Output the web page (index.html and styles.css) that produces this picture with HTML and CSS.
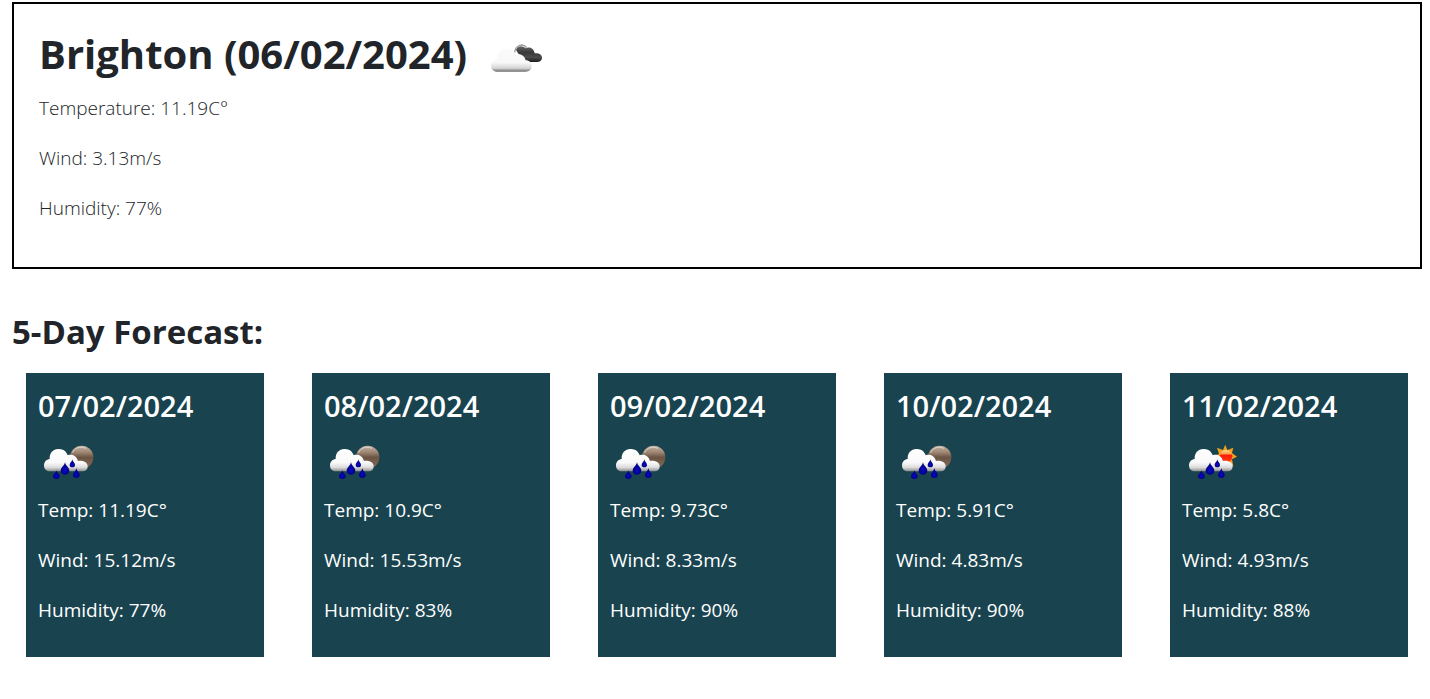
FILE: index.html
```html
<!DOCTYPE html>
<html lang="en">
<head>
<meta charset="utf-8">
<title>Weather Dashboard</title>
<link rel="stylesheet" href="styles.css">
</head>
<body>
<svg class="defs" aria-hidden="true">
  <defs>
    <linearGradient id="cloud" x1="0" y1="0" x2="0" y2="1">
      <stop offset="0" stop-color="#fff"/><stop offset=".6" stop-color="#fafafa"/><stop offset=".82" stop-color="#ddd"/><stop offset="1" stop-color="#8c8c8c"/>
    </linearGradient>
    <linearGradient id="pale" x1="0" y1="0" x2="0" y2="1">
      <stop offset="0" stop-color="#fafafa"/><stop offset=".6" stop-color="#f8f8f8"/><stop offset=".85" stop-color="#d4d4d4"/><stop offset="1" stop-color="#6c6c6c"/>
    </linearGradient>
    <linearGradient id="dark" x1="0" y1="0" x2="0" y2="1">
      <stop offset="0" stop-color="#666"/><stop offset=".4" stop-color="#383838"/><stop offset=".7" stop-color="#4c4c4c"/><stop offset="1" stop-color="#1c1c1c"/>
    </linearGradient>
    <linearGradient id="moon" x1="0" y1="0" x2="0" y2="1">
      <stop offset="0" stop-color="#c5b5a7"/><stop offset=".3" stop-color="#9c8370"/><stop offset=".5" stop-color="#6b5443"/><stop offset="1" stop-color="#866d59"/>
    </linearGradient>
    <linearGradient id="sun" x1="0" y1="0" x2="0" y2="1">
      <stop offset="0" stop-color="#ffe0a0"/><stop offset=".3" stop-color="#ff9a40"/><stop offset=".42" stop-color="#fa1c08"/><stop offset="1" stop-color="#ff3a10"/>
    </linearGradient>
    <radialGradient id="drop" cx=".5" cy=".65" r=".55">
      <stop offset="0" stop-color="#0808d0"/><stop offset="1" stop-color="#00006c"/>
    </radialGradient>
    <g id="rain">
      <path fill="url(#cloud)" d="M57 109C47 108 42 100 42 91C42 80 49 74 59 72C58 54 69 43 85 42C99 41 110 50 113 61C124 57 139 61 144 78C154 76 173 79 173 94C173 104 167 109 158 109Z"/>
      <g fill="url(#drop)">
        <path d="M105 80C105 91 118 96 118 107A13 12 0 0 1 92 107C92 96 105 91 105 80Z"/>
        <path d="M127 73C127 80 135 83 135 90A8 7 0 0 1 119 90C119 83 127 80 127 73Z"/>
        <path d="M79 105C79 113 89 117 89 124A10 8 0 0 1 69 124C69 117 79 113 79 105Z"/>
        <path d="M139 98C139 107 149 112 149 120A10 9 0 0 1 129 120C129 112 139 107 139 98Z"/>
      </g>
    </g>
    <symbol id="rain-night" viewBox="24 0 180 168">
      <circle cx="155" cy="67" r="35" fill="url(#moon)"/>
      <path d="M128 53C134 38 151 33 168 40" fill="none" stroke="#dfd4ca" stroke-width="3"/>
      <use href="#rain"/>
    </symbol>
    <symbol id="rain-day" viewBox="18 0 180 168">
      <path fill="#f2a01c" d="M148 29L154 45L172 38L168 54L183 65L168 73L172 94L157 87L149 97L140 87L126 90L130 73L115 65L129 56L123 38L141 45Z"/>
      <circle cx="150" cy="64" r="19" fill="url(#sun)"/>
      <use href="#rain" x="-3"/>
    </symbol>
    <symbol id="clouds" viewBox="24 0 180 168">
      <path d="M104 67C106 47 127 37 140 53" fill="none" stroke="#999" stroke-width="4"/>
      <path fill="url(#dark)" d="M108 60C112 47 127 45 137 55C149 48 162 55 164 70C175 68 187 74 186 84C185 92 180 96 171 96H131Z"/>
      <path fill="url(#pale)" d="M50 125C38 123 33 116 33 107C33 96 41 89 51 88C49 70 62 56 80 56C94 55 104 64 107 75C120 69 134 77 137 91C148 91 155 98 155 108C155 118 148 125 137 125Z"/>
    </symbol>
  </defs>
</svg>
<main class="page">
  <section class="today">
    <div class="today-head">
      <h1 class="city">Brighton (06/02/2024)</h1>
      <svg class="icon" role="img" aria-label="Broken clouds"><use href="#clouds"/></svg>
    </div>
    <p class="reading">Temperature: 11.19C°</p>
    <p class="reading">Wind: 3.13m/s</p>
    <p class="reading">Humidity: 77%</p>
  </section>
  <h2 class="forecast-title">5-Day Forecast:</h2>
  <section class="forecast">
    <article class="card">
      <h3 class="date">07/02/2024</h3>
      <svg class="icon" role="img" aria-label="Rain"><use href="#rain-night"/></svg>
      <p class="reading">Temp: 11.19C°</p>
      <p class="reading">Wind: 15.12m/s</p>
      <p class="reading">Humidity: 77%</p>
    </article>
    <article class="card">
      <h3 class="date">08/02/2024</h3>
      <svg class="icon" role="img" aria-label="Rain"><use href="#rain-night"/></svg>
      <p class="reading">Temp: 10.9C°</p>
      <p class="reading">Wind: 15.53m/s</p>
      <p class="reading">Humidity: 83%</p>
    </article>
    <article class="card">
      <h3 class="date">09/02/2024</h3>
      <svg class="icon" role="img" aria-label="Rain"><use href="#rain-night"/></svg>
      <p class="reading">Temp: 9.73C°</p>
      <p class="reading">Wind: 8.33m/s</p>
      <p class="reading">Humidity: 90%</p>
    </article>
    <article class="card">
      <h3 class="date">10/02/2024</h3>
      <svg class="icon" role="img" aria-label="Rain"><use href="#rain-night"/></svg>
      <p class="reading">Temp: 5.91C°</p>
      <p class="reading">Wind: 4.83m/s</p>
      <p class="reading">Humidity: 90%</p>
    </article>
    <article class="card">
      <h3 class="date">11/02/2024</h3>
      <svg class="icon" role="img" aria-label="Rain with sun"><use href="#rain-day"/></svg>
      <p class="reading">Temp: 5.8C°</p>
      <p class="reading">Wind: 4.93m/s</p>
      <p class="reading">Humidity: 88%</p>
    </article>
  </section>
</main>
</body>
</html>
```
FILE: styles.css
```css
* { box-sizing: border-box; }
body {
  margin: 0;
  background: #fff;
  color: #212529;
  font-family: "Segoe UI", "Open Sans", "Noto Sans", sans-serif;
}
h1, h2, h3, p { margin: 0; }
.defs { position: absolute; width: 0; height: 0; }
.page { padding: 2px 8px 0 12px; }
.today {
  border: 2px solid #000;
  padding: 26px 25px 32px;
}
.today-head { display: flex; align-items: flex-start; gap: 21px; }
.city { font-size: 40px; line-height: 48px; font-weight: 700; }
.icon { display: block; width: 60px; height: 56px; flex: none; }
.reading {
  font-size: 19px;
  line-height: 30px;
  margin-bottom: 20px;
}
.today .reading { font-weight: 300; }
.today .reading:last-child { margin-bottom: 12px; }
.today-head + .reading { margin-top: 7px; }
.forecast-title {
  margin-top: 38px;
  font-size: 33px;
  line-height: 50px;
  font-weight: 700;
}
.forecast {
  display: grid;
  grid-template-columns: repeat(5, minmax(0, 1fr));
  gap: 48px;
  margin-top: 16px;
  padding: 0 14px;
}
.card {
  padding: 14px 12px 12px;
  background: #19444f;
  color: #fff;
}
.date {
  font-size: 29px;
  line-height: 38px;
  font-weight: 600;
  margin-bottom: 10px;
}
.card .icon { margin-bottom: 4px; }
```
